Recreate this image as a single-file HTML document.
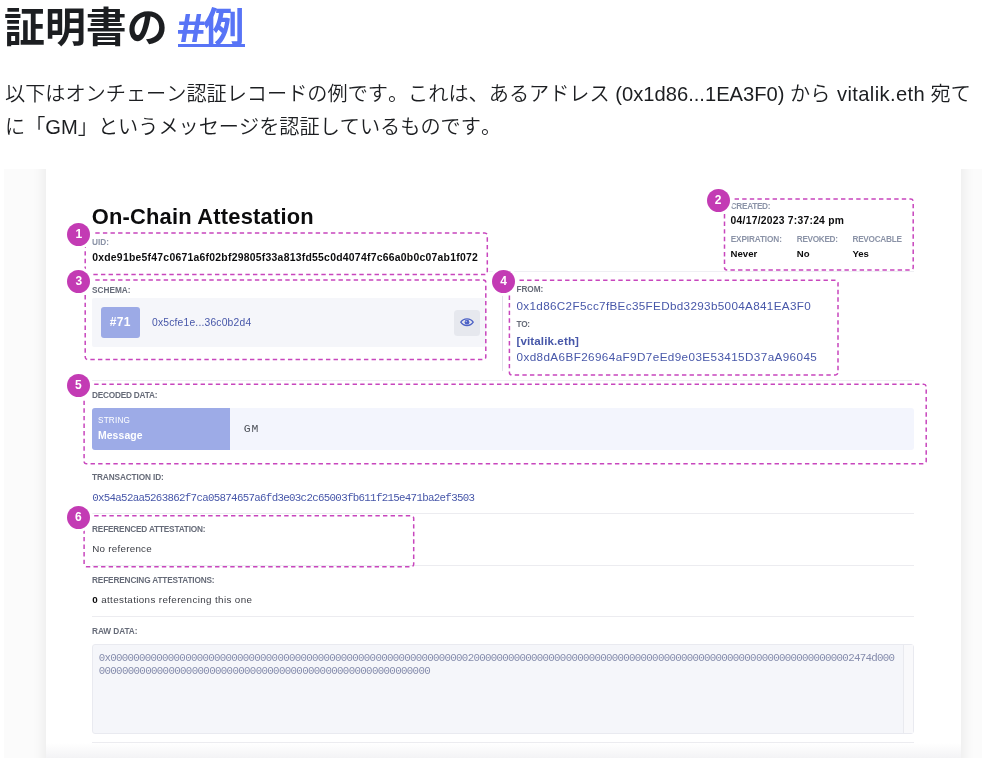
<!DOCTYPE html>
<html lang="ja">
<head>
<meta charset="utf-8">
<title>証明書の例</title>
<style>
*{box-sizing:border-box;margin:0;padding:0}
html,body{width:982px;height:768px;overflow:hidden;background:#fff}
body{position:relative;font-family:"Liberation Sans","Noto Sans CJK JP",sans-serif;color:#2e2f31}
.abs{position:absolute;white-space:nowrap}
h1{will-change:transform;font-family:"Noto Sans CJK JP","Liberation Sans",sans-serif;position:absolute;left:4px;top:-5.2px;font-kerning:none;font-size:40.9px;line-height:60px;font-weight:700;color:#1c1e21;white-space:nowrap}
h1 a{color:#5874f6;text-decoration:none;margin-left:-1px}
h1 a i{font-style:normal;display:inline-block;transform:scale(1.26,.93);transform-origin:0 78%;margin-right:3.4px}
#ul{position:absolute;left:177.5px;top:44.1px;width:67.7px;height:3.3px;background:#5874f6}
p.lead{will-change:transform;position:absolute;left:5px;top:77.5px;width:977px;font-size:20.16px;line-height:33.3px;color:#1c1e21;font-weight:350;white-space:nowrap;font-kerning:none;font-feature-settings:"kern" 0,"palt" 0}

/* embedded screenshot */
#shot{position:absolute;left:4px;top:169px;width:978px;height:589px;background:#fbfbfb;overflow:hidden}
#card{position:absolute;left:42px;top:-20px;width:914.6px;height:629px;background:#fff;box-shadow:0 0 14px rgba(0,0,0,.09)}
#shot .fade{position:absolute;left:42px;width:914.6px;bottom:0;height:15px;background:linear-gradient(to bottom,rgba(243,243,245,0),rgba(243,243,245,1))}
#img{position:absolute;left:-4px;top:-169px;width:982px;height:768px;filter:blur(.4px);font-family:"Liberation Sans",sans-serif}
.t{position:absolute;white-space:nowrap;line-height:1}
.hr{position:absolute;height:1px;background:#ececf0;left:92.3px;width:822px}
.dot{position:absolute;width:23px;height:23px;border-radius:50%;background:#c33bb4;color:#fff;font-weight:700;font-size:12px;line-height:23px;text-align:center;box-shadow:0 0 0 3px #fff}
svg.ov{position:absolute;left:0;top:0;width:982px;height:768px;pointer-events:none}
</style>
</head>
<body>
<h1>証明書の <a><i>#</i>例</a></h1>
<div id="ul"></div>
<p class="lead">以下はオンチェーン認証レコードの例です。これは、あるアドレス <span>(0x1d86...1EA3F0)</span> から <span style="letter-spacing:.36px;margin-left:1px">vitalik.eth</span> 宛て<br>に「<span>GM</span>」というメッセージを認証しているものです。</p>

<div id="shot">
 <div id="card"></div>
 <div class="fade"></div>
 <div id="img">
  <!-- schema row -->
  <div class="abs" style="left:92.3px;top:298.4px;width:393.5px;height:48.3px;background:#f5f6fa;border-radius:2px"></div>
  <div class="abs" style="left:101.3px;top:306.9px;width:38.6px;height:31.1px;background:#9caae6;border-radius:3px"></div>
  <div class="abs" style="left:454.4px;top:310.1px;width:25.7px;height:25.6px;background:#e6e8ee;border-radius:3.5px"></div>
  <svg class="abs" style="left:459.7px;top:317.2px" width="14" height="10.4" viewBox="0 0 28 20.8"><path d="M1.6 10.4 C7 1.6 21 1.6 26.4 10.4 C21 19.2 7 19.2 1.6 10.4 Z" fill="none" stroke="#4d62c6" stroke-width="2.6"/><circle cx="14" cy="10.4" r="4.8" fill="#4d62c6"/><circle cx="12.6" cy="8.8" r="1.5" fill="#aab4ea"/></svg>

  <!-- from / to rules -->
  <div class="abs" style="left:489.4px;top:270.6px;width:424.6px;height:1px;background:#efeff3"></div>
  <div class="abs" style="left:502.2px;top:271px;width:1.2px;height:100px;background:#e1e2ea"></div>

  <!-- decoded data -->
  <div class="hr" style="top:380px;background:#efeff3"></div>
  <div class="abs" style="left:92.3px;top:408.2px;width:821.4px;height:41.4px;background:#f3f5fd;border-radius:3px"></div>
  <div class="abs" style="left:92.3px;top:408.2px;width:137.4px;height:41.4px;background:#9dabe7;border-radius:3px 0 0 3px"></div>

  <div class="hr" style="top:512.8px"></div>
  <div class="hr" style="top:564.6px"></div>
  <div class="hr" style="top:615.8px"></div>
  <div class="hr" style="top:742.2px"></div>

  <!-- raw data -->
  <div class="abs" style="left:92px;top:644.2px;width:821.8px;height:89.4px;background:#f5f6fa;border:1px solid #e9eaf0;border-radius:3px"></div>
  <div class="abs" style="left:902.6px;top:645.2px;width:10.2px;height:87.4px;background:#f9f9fb;border-left:1px solid #e9eaef"></div>

  <div class="t" style="left:91.72px;top:205.86px;font-size:21.9px;font-weight:700;color:#0c0c0d;letter-spacing:0.201px;">On-Chain Attestation</div>
  <div class="t" style="left:92.07px;top:239.32px;font-size:8.25px;font-weight:700;color:#8b93a7;letter-spacing:-0.043px;">UID:</div>
  <div class="t" style="left:92.18px;top:252.50px;font-size:10.4px;font-weight:700;color:#0c0c0d;letter-spacing:0.253px;">0xde91be5f47c0671a6f02bf29805f33a813fd55c0d4074f7c66a0b0c07ab1f072</div>
  <div class="t" style="left:730.67px;top:202.72px;font-size:8.25px;font-weight:700;color:#8b93a7;letter-spacing:-0.315px;">CREATED:</div>
  <div class="t" style="left:730.59px;top:216.38px;font-size:10.3px;font-weight:700;color:#0c0c0d;letter-spacing:0.258px;">04/17/2023 7:37:24 pm</div>
  <div class="t" style="left:730.67px;top:235.92px;font-size:8.25px;font-weight:700;color:#8b93a7;letter-spacing:-0.133px;">EXPIRATION:</div>
  <div class="t" style="left:796.87px;top:235.92px;font-size:8.25px;font-weight:700;color:#8b93a7;letter-spacing:-0.356px;">REVOKED:</div>
  <div class="t" style="left:852.47px;top:235.92px;font-size:8.25px;font-weight:700;color:#8b93a7;letter-spacing:-0.289px;">REVOCABLE</div>
  <div class="t" style="left:730.62px;top:249.47px;font-size:9.6px;font-weight:700;color:#0c0c0d;">Never</div>
  <div class="t" style="left:796.82px;top:249.47px;font-size:9.6px;font-weight:700;color:#0c0c0d;">No</div>
  <div class="t" style="left:852.42px;top:249.47px;font-size:9.6px;font-weight:700;color:#0c0c0d;">Yes</div>
  <div class="t" style="left:92.07px;top:286.92px;font-size:8.25px;font-weight:700;color:#666b78;letter-spacing:-0.015px;">SCHEMA:</div>
  <div class="t" style="left:109.72px;top:316.34px;font-size:12px;font-weight:700;color:#fff;letter-spacing:0.296px;">#71</div>
  <div class="t" style="left:151.99px;top:317.88px;font-size:10.3px;font-weight:400;color:#4757a9;letter-spacing:0.195px;">0x5cfe1e...36c0b2d4</div>
  <div class="t" style="left:516.57px;top:286.12px;font-size:8.25px;font-weight:700;color:#666b78;letter-spacing:-0.110px;">FROM:</div>
  <div class="t" style="left:516.53px;top:299.90px;font-size:11.7px;font-weight:400;color:#4757a9;letter-spacing:0.329px;">0x1d86C2F5cc7fBEc35FEDbd3293b5004A841EA3F0</div>
  <div class="t" style="left:516.57px;top:321.32px;font-size:8.25px;font-weight:700;color:#666b78;letter-spacing:-0.289px;">TO:</div>
  <div class="t" style="left:516.54px;top:335.48px;font-size:11.6px;font-weight:700;color:#4757a9;letter-spacing:0.099px;">[vitalik.eth]</div>
  <div class="t" style="left:516.53px;top:351.10px;font-size:11.7px;font-weight:400;color:#4757a9;letter-spacing:0.398px;">0xd8dA6BF26964aF9D7eEd9e03E53415D37aA96045</div>
  <div class="t" style="left:92.07px;top:391.92px;font-size:8.25px;font-weight:700;color:#666b78;letter-spacing:-0.222px;">DECODED DATA:</div>
  <div class="t" style="left:97.97px;top:417.26px;font-size:8.2px;font-weight:400;color:#fff;letter-spacing:.2px">STRING</div>
  <div class="t" style="left:97.88px;top:431.20px;font-size:10.4px;font-weight:700;color:#fff;letter-spacing:0.145px;">Message</div>
  <div class="t" style="left:243.64px;top:424.36px;font-size:11.4px;font-weight:400;color:#4d5159;font-family:'Liberation Mono',monospace;letter-spacing:1.056px;">GM</div>
  <div class="t" style="left:92.07px;top:474.32px;font-size:8.25px;font-weight:700;color:#666b78;letter-spacing:-0.116px;">TRANSACTION ID:</div>
  <div class="t" style="left:92.17px;top:492.72px;font-size:10.8px;font-weight:400;color:#4757a9;font-family:'Liberation Mono',monospace;letter-spacing:-0.689px;">0x54a52aa5263862f7ca05874657a6fd3e03c2c65003fb611f215e471ba2ef3503</div>
  <div class="t" style="left:92.07px;top:525.92px;font-size:8.25px;font-weight:700;color:#666b78;letter-spacing:-0.182px;">REFERENCED ATTESTATION:</div>
  <div class="t" style="left:92.21px;top:543.50px;font-size:9.8px;font-weight:400;color:#3b3d44;letter-spacing:0.262px;">No reference</div>
  <div class="t" style="left:92.07px;top:576.62px;font-size:8.25px;font-weight:700;color:#666b78;letter-spacing:-0.152px;">REFERENCING ATTESTATIONS:</div>
  <div class="t" style="left:92.21px;top:595.10px;font-size:9.8px;font-weight:400;color:#3b3d44;letter-spacing:0.372px;"><b style="color:#0c0c0d">0</b> attestations referencing this one</div>
  <div class="t" style="left:92.07px;top:628.22px;font-size:8.25px;font-weight:700;color:#666b78;letter-spacing:-0.077px;">RAW DATA:</div>
  <div class="t" style="left:98.67px;top:653.02px;font-size:10.8px;font-weight:400;color:#868dad;font-family:'Liberation Mono',monospace;letter-spacing:-0.714px;">0x000000000000000000000000000000000000000000000000000000000000002000000000000000000000000000000000000000000000000000000000000000002474d000</div>
  <div class="t" style="left:98.67px;top:666.02px;font-size:10.8px;font-weight:400;color:#868dad;font-family:'Liberation Mono',monospace;letter-spacing:-0.665px;">000000000000000000000000000000000000000000000000000000000</div>

  <!-- annotation boxes -->
  <svg class="ov" viewBox="0 0 982 768" fill="none" stroke="#c846bd" stroke-width="1.5" stroke-dasharray="4.4 3.2">
   <rect x="85.2" y="233" width="402.1" height="41.6" rx="2.5"/>
   <rect x="85.2" y="279.9" width="400.6" height="79.6" rx="2.5"/>
   <rect x="724.5" y="199" width="188.7" height="71.0" rx="2.5"/>
   <rect x="509.4" y="280.3" width="328.6" height="94.6" rx="2.5"/>
   <rect x="84.1" y="384.3" width="842.1" height="79.5" rx="2.5"/>
   <rect x="84.1" y="515.7" width="329.6" height="51.0" rx="2.5"/>
  </svg>
  <div class="dot" style="left:67.30px;top:223.10px">1</div>
  <div class="dot" style="left:706.50px;top:188.90px">2</div>
  <div class="dot" style="left:67.30px;top:269.60px">3</div>
  <div class="dot" style="left:492.00px;top:270.30px">4</div>
  <div class="dot" style="left:66.80px;top:374.10px">5</div>
  <div class="dot" style="left:66.80px;top:505.80px">6</div>
 </div>
</div>
</body>
</html>
